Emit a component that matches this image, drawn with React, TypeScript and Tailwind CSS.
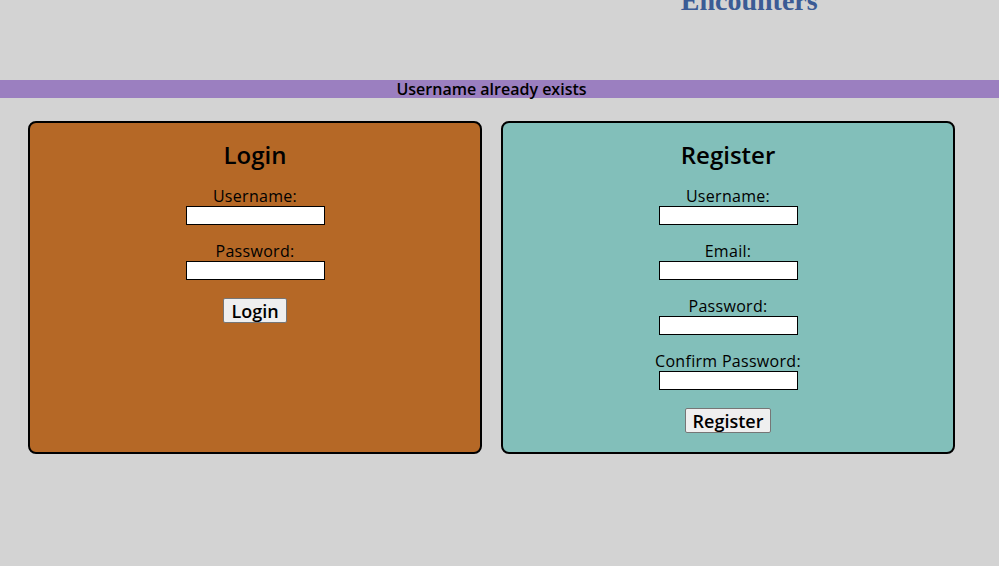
import { useState } from 'react';

function Field({ label, type = 'text' }: { label: string; type?: string }) {
  return (
    <div className="flex flex-col items-center">
      <label className="text-[16px] leading-[20px] text-black tracking-[0.3px]">{label}</label>
      <input
        type={type}
        className="w-[139px] h-[19px] bg-white border border-black outline-none px-1 text-[13px]"
      />
    </div>
  );
}

function SubmitButton({ children }: { children: string }) {
  return (
    <button className="h-[25px] px-[7px] bg-[#efefef] border border-[#767676] rounded-[2px] text-[18px] leading-[20px] font-semibold text-black">
      {children}
    </button>
  );
}

export default function App() {
  const [error] = useState('Username already exists');

  return (
    <div className="min-h-[566px] bg-[#d3d3d3] font-['Open_Sans',sans-serif] text-black">
      {/* Header (page is scrolled, title mostly off screen) */}
      <div className="h-[80px] overflow-hidden grid grid-cols-2">
        <div />
        <h1 className="text-center -mt-[16px] text-[28px] leading-[34px] font-bold text-[#3b5b95] font-['Liberation_Serif',serif]">
          Encounters
        </h1>
      </div>

      {/* Error banner */}
      <div className="h-[18px] bg-[#9b7fc0] flex items-center justify-center pr-[16px]">
        <span className="text-[16px] leading-[18px] font-semibold">{error}</span>
      </div>

      <div className="grid grid-cols-2 gap-[19px] pl-[28px] pr-[44px] mt-[23px]">
        {/* Login */}
        <div className="bg-[#b56826] border-2 border-black rounded-[8px] pt-[18px] pb-[18px] flex flex-col items-center h-[333px]">
          <h2 className="text-[24px] leading-[28px] font-semibold">Login</h2>
          <div className="mt-[17px] flex flex-col gap-[16px]">
            <Field label="Username:" />
            <Field label="Password:" type="password" />
          </div>
          <div className="mt-[18px]">
            <SubmitButton>Login</SubmitButton>
          </div>
        </div>

        {/* Register */}
        <div className="bg-[#82bfba] border-2 border-black rounded-[8px] pt-[18px] pb-[18px] flex flex-col items-center h-[333px]">
          <h2 className="text-[24px] leading-[28px] font-semibold">Register</h2>
          <div className="mt-[17px] flex flex-col gap-[16px]">
            <Field label="Username:" />
            <Field label="Email:" type="email" />
            <Field label="Password:" type="password" />
            <Field label="Confirm Password:" type="password" />
          </div>
          <div className="mt-[18px]">
            <SubmitButton>Register</SubmitButton>
          </div>
        </div>
      </div>
    </div>
  );
}
